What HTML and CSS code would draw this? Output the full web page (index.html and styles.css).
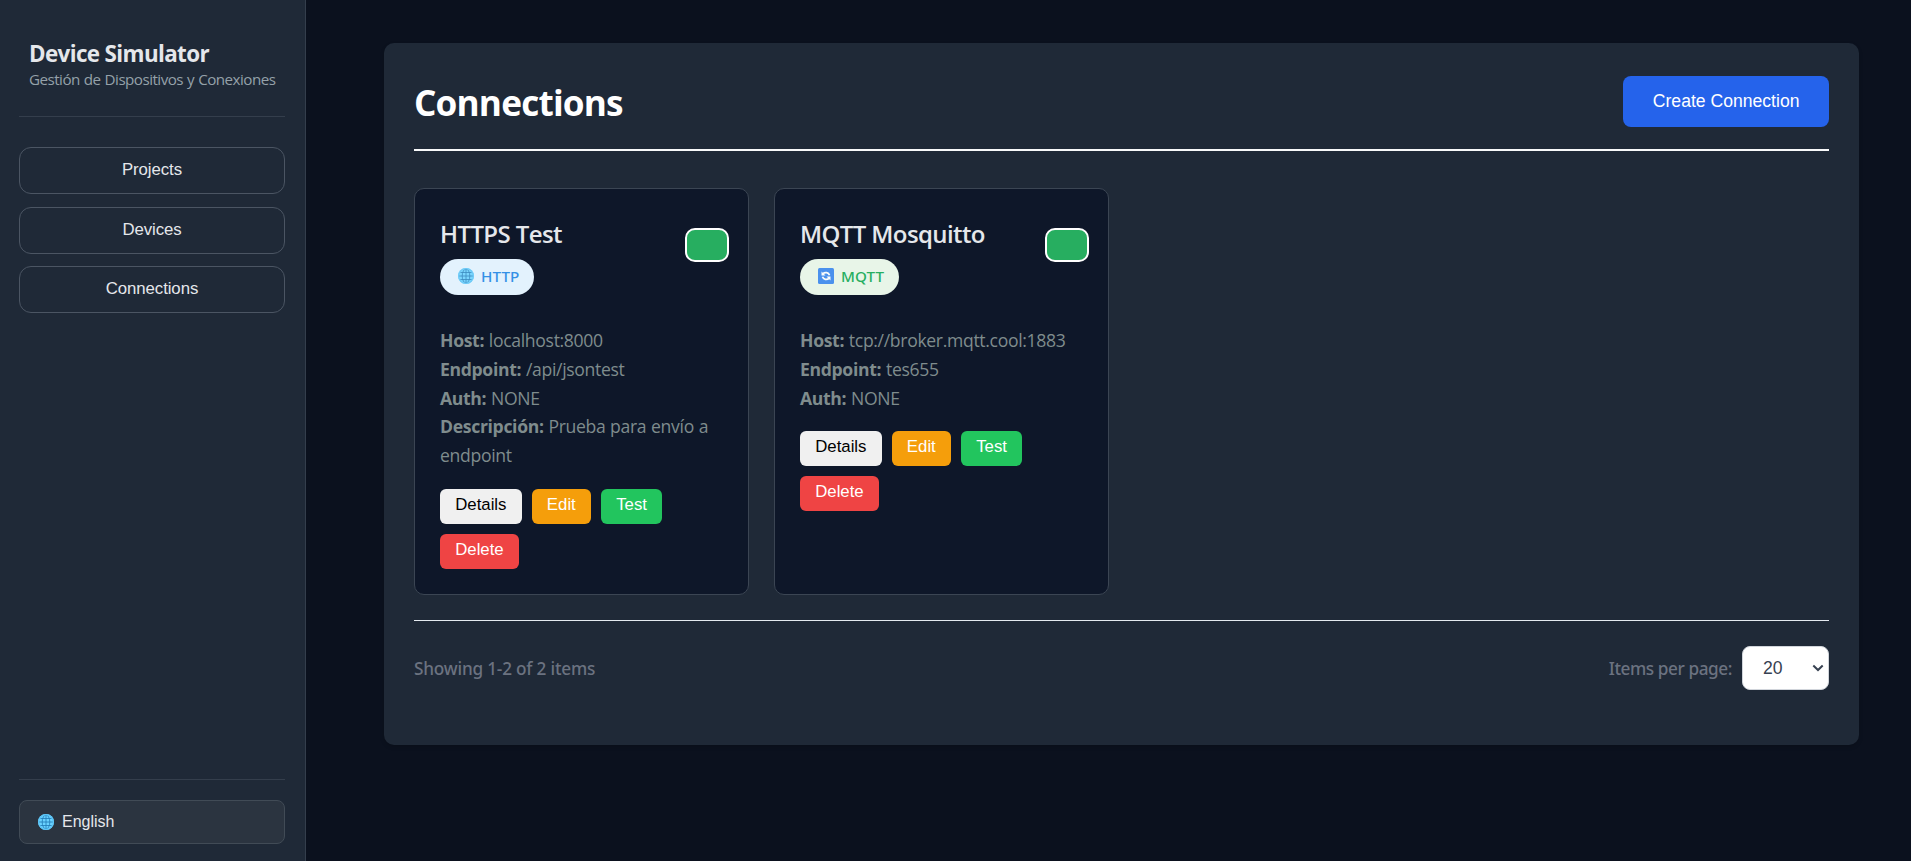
FILE: index.html
```html
<!DOCTYPE html>
<html lang="en">
<head>
<meta charset="utf-8">
<title>Device Simulator</title>
<link rel="stylesheet" href="styles.css">
</head>
<body>
<svg class="defs" width="0" height="0">
  <symbol id="globe" viewBox="0 0 16 16">
    <circle cx="8" cy="8" r="8" fill="#6ad2ff"/>
    <g fill="none" stroke="#1f78b5" stroke-width="0.8">
      <path d="M8 1v14M1 8h14M2.300 4.500h11.400M2.300 11.500h11.400"/>
      <ellipse cx="8" cy="8" rx="3.800" ry="7"/>
    </g>
    <circle cx="8" cy="8" r="7.400" fill="none" stroke="#5cc4f6" stroke-width="1.200"/>
  </symbol>
  <symbol id="sync" viewBox="0 0 16 16">
    <rect width="16" height="16" rx="1.500" fill="#2f80ee"/>
    <path d="M5 5.600c2-1.700 5.600-1.300 6.500 1.600M11 10.400c-2 1.700-5.600 1.300-6.500-1.600" fill="none" stroke="#fff" stroke-width="1.700"/>
    <path d="M3.500 3.500v4h4zM12.500 12.500v-4h-4z" fill="#fff"/>
  </symbol>
</svg>
<div class="app">
  <aside class="sidebar">
    <header class="brand">
      <h2 class="brand-title"><span>Device Simulator</span></h2>
      <p class="brand-sub"><span>Gestión de Dispositivos y Conexiones</span></p>
    </header>
    <nav class="nav">
      <button class="nav-btn">Projects</button>
      <button class="nav-btn">Devices</button>
      <button class="nav-btn">Connections</button>
    </nav>
    <footer class="lang">
      <button class="lang-btn"><svg class="icon"><use href="#globe"/></svg>English</button>
    </footer>
  </aside>
  <main class="main">
    <section class="panel">
      <header class="panel-head">
        <h1 class="panel-title">Connections</h1>
        <button class="create-btn">Create Connection</button>
      </header>
      <div class="cards">
        <article class="card">
          <div class="card-head">
            <div>
              <h3 class="card-title">HTTPS Test</h3>
              <span class="badge badge-http"><svg class="icon"><use href="#globe"/></svg>HTTP</span>
            </div>
            <span class="status"></span>
          </div>
          <div class="info">
            <p><strong>Host:</strong> localhost:8000</p>
            <p><strong>Endpoint:</strong> /api/jsontest</p>
            <p><strong>Auth:</strong> NONE</p>
            <p><strong>Descripción:</strong> Prueba para envío a endpoint</p>
          </div>
          <div class="actions">
            <button class="btn">Details</button>
            <button class="btn btn-edit">Edit</button>
            <button class="btn btn-test">Test</button>
            <button class="btn btn-delete">Delete</button>
          </div>
        </article>
        <article class="card">
          <div class="card-head">
            <div>
              <h3 class="card-title">MQTT Mosquitto</h3>
              <span class="badge badge-mqtt"><svg class="icon"><use href="#sync"/></svg>MQTT</span>
            </div>
            <span class="status"></span>
          </div>
          <div class="info">
            <p><strong>Host:</strong> tcp://broker.mqtt.cool:1883</p>
            <p><strong>Endpoint:</strong> tes655</p>
            <p><strong>Auth:</strong> NONE</p>
          </div>
          <div class="actions">
            <button class="btn">Details</button>
            <button class="btn btn-edit">Edit</button>
            <button class="btn btn-test">Test</button>
            <button class="btn btn-delete">Delete</button>
          </div>
        </article>
      </div>
      <footer class="pager">
        <span class="pager-count">Showing 1-2 of 2 items</span>
        <label class="pager-size"><span class="pager-label">Items per page:</span>
          <span class="select">20<svg class="chevron" viewBox="0 0 12 8"><path d="M1.300 1.500 6 6l4.700-4.500"/></svg></span>
        </label>
      </footer>
    </section>
  </main>
</div>
</body>
</html>
```
FILE: styles.css
```css
* { box-sizing: border-box; margin: 0; padding: 0; }
body {
  background: #0b111e;
  color: #e5e7eb;
  font-family: "Open Sans", "Noto Sans", sans-serif;
  font-size: 16px;
}
button { font-family: "Liberation Sans", Arial, sans-serif; border: 0; color: inherit; }
.defs { position: absolute; }
.app { display: flex; height: 861px; overflow: hidden; }

.sidebar {
  display: flex;
  flex-direction: column;
  flex: none;
  width: 306px;
  padding: 19px 20px 17px 19px;
  background: #1f2937;
  border-right: 1px solid #343e4c;
}
.brand { height: 98px; padding: 19px 10px 0; border-bottom: 1px solid #343e4c; white-space: nowrap; }
.brand-title { font-size: 22.4px; line-height: 32px; font-weight: 700; letter-spacing: -0.62px; }
.brand-sub { font-size: 15.2px; line-height: 18px; color: #95a1a9; letter-spacing: -0.53px; word-spacing: 0.6px; }
.nav { display: flex; flex-direction: column; gap: 12.5px; padding-top: 30px; }
.nav-btn {
  height: 47px;
  padding-bottom: 1px;
  border: 1px solid #4b5563;
  border-radius: 12px;
  background: none;
  font-size: 16.8px;
  letter-spacing: -0.08px;
}
.lang { margin-top: auto; padding-top: 20px; border-top: 1px solid #343e4c; }
.lang-btn {
  display: flex;
  align-items: center;
  gap: 8px;
  width: 100%;
  height: 44px;
  padding: 0 18px;
  border: 1px solid #414b56;
  border-radius: 8px;
  background: #2b3440;
  font-size: 16px;
}
.icon { width: 16px; height: 16px; flex: none; }

.main { flex: 1; padding: 43px 52px 0 78px; }
.panel {
  height: 702px;
  padding: 33px 30px 0;
  border-radius: 10px;
  background: #1f2937;
  box-shadow: 0 2px 4px rgba(0, 0, 0, 0.15);
}
.panel-head {
  display: flex;
  justify-content: space-between;
  align-items: flex-start;
  height: 75px;
  border-bottom: 2px solid #f8f9fa;
}
.panel-title { font-size: 35.2px; line-height: 52px; font-weight: 700; color: #fff; letter-spacing: -0.82px; }
.create-btn {
  height: 51px;
  padding: 0 29.5px 1px;
  border-radius: 8px;
  background: #2563eb;
  color: #fff;
  font-size: 17.6px;
}

.cards { display: grid; grid-template-columns: repeat(2, 335px); gap: 25px; padding: 37px 0 25px; }
.card {
  height: 407px;
  padding: 25px;
  border: 1px solid #3b4553;
  border-radius: 10px;
  background: #0e1729;
}
.card-head { display: flex; justify-content: space-between; height: 112px; margin-right: -6px; }
.card-title { font-size: 24px; line-height: 40px; font-weight: 600; letter-spacing: -0.6px; padding-bottom: 5px; }
.badge {
  display: inline-flex;
  align-items: center;
  gap: 7.5px;
  height: 36px;
  padding: 0 15px 2px 17.5px;
  border-radius: 18px;
  font-family: "Noto Sans", sans-serif;
  font-size: 15.2px;
  font-weight: 500;
  letter-spacing: 0.1px;
}
.badge-http { background: #e3f2fd; color: #3490e6; }
.badge-mqtt { background: #e8f5e8; color: #27ae60; }
.badge .icon { opacity: 0.85; }
.status {
  width: 44px;
  height: 34px;
  margin-top: 14px;
  border: 2px solid #fff;
  border-radius: 10px;
  background: #27ae60;
}
.info {
  margin-bottom: 19px;
  color: #7f8c8d;
  font-size: 17.6px;
  line-height: 28.8px;
  letter-spacing: -0.33px;
  word-spacing: 0.5px;
}
.actions { display: flex; flex-wrap: wrap; gap: 10px; }
.btn {
  height: 35px;
  padding: 0 15.2px 3px;
  border-radius: 6px;
  background: #f0f0f0;
  color: #000;
  font-size: 16.8px;
}
.btn-edit { background: #f59e0b; color: #fff; }
.btn-test { background: #22c55e; color: #fff; }
.btn-delete { background: #ef4444; color: #fff; }

.pager {
  display: flex;
  justify-content: space-between;
  align-items: center;
  padding-top: 25px;
  border-top: 1px solid #e5eaf0;
  color: #6b7280;
  font-family: "Noto Sans", sans-serif;
  font-size: 17.2px;
  font-weight: 500;
  letter-spacing: -0.2px;
}
.pager-label { letter-spacing: -0.42px; }
.pager-size { display: flex; align-items: center; gap: 10px; }
.select {
  display: flex;
  align-items: center;
  justify-content: space-between;
  width: 87px;
  height: 44px;
  padding: 0 4px 0 20px;
  border: 1px solid #d1d5db;
  border-radius: 8px;
  background: #fff;
  color: #374151;
  font-family: "Liberation Sans", Arial, sans-serif;
  font-size: 17.6px;
  letter-spacing: 0;
}
.chevron { width: 12px; height: 8px; fill: none; stroke: #374151; stroke-width: 2; }
```
